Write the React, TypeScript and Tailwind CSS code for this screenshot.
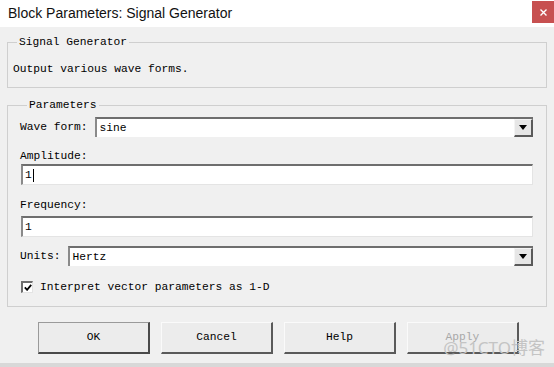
import React from "react";

const mono = { fontFamily: '"Liberation Mono", "DejaVu Sans Mono", monospace' };

function Field({ value, caret }: { value: string; caret?: boolean }) {
  return (
    <div className="ml-[1px] flex h-[21px] items-center border-t-2 border-l-2 border-r border-b border-t-[#6e6e6e] border-l-[#8a8a8a] border-r-[#e4e4e4] border-b-[#e4e4e4] bg-white pl-[2px] text-[11.25px] leading-[14px]">
      <span>{value}</span>
      {caret && <span className="ml-[1px] inline-block h-[13px] w-px bg-black" />}
    </div>
  );
}

function Select({ value }: { value: string }) {
  return (
    <div className="flex h-[20px] flex-1 items-stretch border-t-2 border-l-2 border-t-[#6e6e6e] border-l-[#8a8a8a] bg-white">
      <span className="flex flex-1 items-center pl-[3px] text-[11.25px] leading-[14px]">{value}</span>
      <span className="flex w-[19px] items-center justify-center border-t border-l border-r-2 border-b-2 border-t-[#f4f4f4] border-l-[#f4f4f4] border-r-[#5a5a5a] border-b-[#5a5a5a] bg-[#e6e6e6]">
        <svg width="8" height="5" viewBox="0 0 8 5">
          <path d="M0 0h8L4 5z" fill="#000" />
        </svg>
      </span>
    </div>
  );
}

function Btn({ label, primary, disabled }: { label: string; primary?: boolean; disabled?: boolean }) {
  return (
    <button
      className={`h-[32px] w-[112px] border-t border-l border-r-2 border-b-2 bg-[#ececec] text-[11.25px] ${
        primary
          ? "border-t-[#9a9a9a] border-l-[#9a9a9a] border-r-[#4a4a4a] border-b-[#4a4a4a]"
          : "border-t-[#fafafa] border-l-[#fafafa] border-r-[#5a5a5a] border-b-[#5a5a5a]"
      } ${disabled ? "text-[#a8a8a8]" : "text-black"}`}
      style={mono}
    >
      {label}
    </button>
  );
}

export default function App() {
  return (
    <div className="relative flex h-[367px] w-[554px] flex-col overflow-hidden bg-[#f0f0f0] text-black" style={mono}>
      <div className="flex h-[27px] shrink-0 items-start justify-between bg-white">
        <span
          className="pl-[8px] pt-[3px] text-[14px] leading-[20px] text-[#111]"
          style={{ fontFamily: '"Liberation Sans", Arial, sans-serif' }}
        >
          Block Parameters: Signal Generator
        </span>
        <span className="mt-px flex h-[22px] w-[22px] items-center justify-center bg-[#c75050]">
          <svg width="7" height="7" viewBox="0 0 7 7">
            <path d="M0.5 0.5l6 6M6.5 0.5l-6 6" stroke="#fff" strokeWidth="1.4" />
          </svg>
        </span>
      </div>

      <fieldset className="mx-[7px] mt-[8px] border border-[#cfcfcf] pb-[11px] pl-[5px] pt-[13px]">
        <legend className="ml-[4px] px-[2px] text-[11.25px] leading-[14px]">Signal Generator</legend>
        <div className="text-[11.25px] leading-[14px]">Output various wave forms.</div>
      </fieldset>

      <fieldset className="mx-[7px] mt-[10px] border border-[#cfcfcf] pb-[12px] pl-[12px] pr-[13px] pt-[5px]">
        <legend className="ml-[7px] px-[2px] text-[11.25px] leading-[14px]">Parameters</legend>
        <div className="flex items-center gap-[7px]">
          <span className="text-[11.25px] leading-[14px]">Wave form:</span>
          <Select value="sine" />
        </div>
        <div className="mt-[12px] text-[11.25px] leading-[14px]">Amplitude:</div>
        <div className="mt-[1px]">
          <Field value="1" caret />
        </div>
        <div className="mt-[13px] text-[11.25px] leading-[14px]">Frequency:</div>
        <div className="mt-[4px]">
          <Field value="1" />
        </div>
        <div className="mt-[9px] flex items-center gap-[7px]">
          <span className="text-[11.25px] leading-[14px]">Units:</span>
          <Select value="Hertz" />
        </div>
        <div className="mt-[14px] flex items-center">
          <span className="ml-[1px] flex h-[12px] w-[12px] items-center justify-center border-t-2 border-l-2 border-r border-b border-t-[#6e6e6e] border-l-[#6e6e6e] border-r-[#e4e4e4] border-b-[#e4e4e4] bg-white">
            <svg width="8" height="7" viewBox="0 0 8 7">
              <path d="M0.8 3.4l2.3 2.4L7.2 0.9" stroke="#000" strokeWidth="1.8" fill="none" />
            </svg>
          </span>
          <span className="ml-[7px] text-[11.25px] leading-[14px]">Interpret vector parameters as 1-D</span>
        </div>
      </fieldset>

      <div className="ml-[38px] mt-[15px] flex gap-[11px]">
        <Btn label="OK" primary />
        <Btn label="Cancel" />
        <Btn label="Help" />
        <Btn label="Apply" disabled />
      </div>

      <div className="mt-auto h-[4px] bg-[#d8d8d8]" />

      <span
        className="absolute bottom-[9px] right-[9px] text-[17px] leading-[20px] text-[#c4c4c4]"
        style={{ fontFamily: '"Noto Sans", "Noto Sans CJK SC", sans-serif' }}
      >
        @51CTO博客
      </span>
    </div>
  );
}
